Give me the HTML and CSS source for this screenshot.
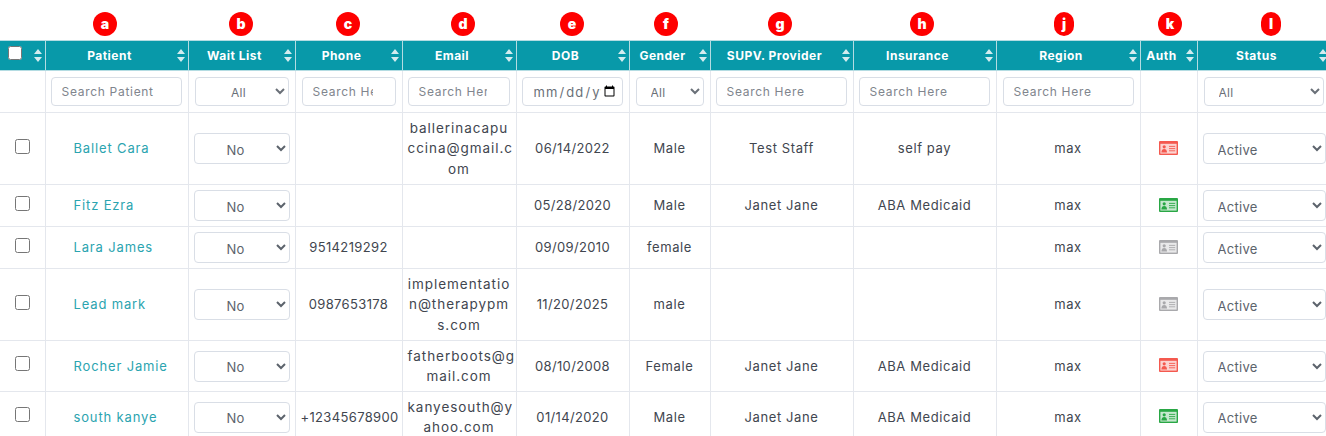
FILE: index.html
```html
<!DOCTYPE html>
<html lang="en">
<head>
<meta charset="utf-8">
<title>Patients</title>
<link rel="stylesheet" href="styles.css">
</head>
<body>
<svg class="defs" width="0" height="0" aria-hidden="true">
  <symbol id="sort" viewBox="0 0 8 13">
    <path d="M4 0 8 5H0Z M0 8H8L4 13Z" fill="currentColor"/>
  </symbol>
  <symbol id="card" viewBox="0 0 19 14">
    <rect x="0" y="0" width="19" height="14" rx="1" fill="currentColor"/>
    <rect x="1.4" y="2.8" width="16.2" height="9.8" fill="#fff" fill-opacity=".74"/>
    <circle cx="5.2" cy="5.8" r="1.6" fill="currentColor"/>
    <path d="M2.4 11.6c0-2.6 1.2-3.6 2.8-3.6s2.8 1 2.8 3.6Z" fill="currentColor"/>
    <path d="M10 5.4h6.2M10 7.6h6.2M10 9.8h6.2" stroke="currentColor" stroke-width=".9" fill="none"/>
  </symbol>
</svg>
<main class="page">
  <div class="marks" aria-hidden="true">
    <span class="mark m-a">a</span><span class="mark m-b">b</span><span class="mark m-c">c</span>
    <span class="mark m-d">d</span><span class="mark m-e">e</span><span class="mark m-f">f</span>
    <span class="mark m-g">g</span><span class="mark m-h">h</span><span class="mark narrow m-j">j</span>
    <span class="mark m-k">k</span><span class="mark narrow m-l">l</span>
  </div>
  <table class="grid">
    <colgroup>
      <col class="c0"><col class="c1"><col class="c2"><col class="c3"><col class="c4"><col class="c5">
      <col class="c6"><col class="c7"><col class="c8"><col class="c9"><col class="c10"><col class="c11">
    </colgroup>
    <thead>
      <tr class="head">
        <th class="th-check"><input class="head-check" type="checkbox"><svg class="sort"><use href="#sort"/></svg></th>
        <th>Patient<svg class="sort"><use href="#sort"/></svg></th>
        <th>Wait List<svg class="sort"><use href="#sort"/></svg></th>
        <th>Phone<svg class="sort"><use href="#sort"/></svg></th>
        <th>Email<svg class="sort"><use href="#sort"/></svg></th>
        <th>DOB<svg class="sort"><use href="#sort"/></svg></th>
        <th>Gender<svg class="sort"><use href="#sort"/></svg></th>
        <th>SUPV. Provider<svg class="sort"><use href="#sort"/></svg></th>
        <th>Insurance<svg class="sort"><use href="#sort"/></svg></th>
        <th>Region<svg class="sort"><use href="#sort"/></svg></th>
        <th>Auth<svg class="sort"><use href="#sort"/></svg></th>
        <th>Status<svg class="sort"><use href="#sort"/></svg></th>
      </tr>
      <tr class="filters">
        <td></td>
        <td><input class="field" type="text" placeholder="Search Patient"></td>
        <td class="inset"><select class="field pick center"><option>All</option></select></td>
        <td class="inset"><input class="field" type="text" placeholder="Search Here"></td>
        <td><input class="field" type="text" placeholder="Search Here"></td>
        <td><input class="field date" type="date"></td>
        <td class="inset"><select class="field pick"><option>All</option></select></td>
        <td><input class="field" type="text" placeholder="Search Here"></td>
        <td><input class="field" type="text" placeholder="Search Here"></td>
        <td class="inset"><input class="field" type="text" placeholder="Search Here"></td>
        <td></td>
        <td class="inset"><select class="field pick"><option>All</option></select></td>
      </tr>
    </thead>
    <tbody>
      <tr class="tall">
        <td><input class="row-check" type="checkbox"></td>
        <td class="name"><a href="#">Ballet Cara</a></td>
        <td><select class="cell-pick center"><option>No</option></select></td>
        <td></td>
        <td class="mail">ballerinacapu<br>ccina@gmail.c<br>om</td>
        <td class="num">06/14/2022</td>
        <td>Male</td>
        <td>Test Staff</td>
        <td>self pay</td>
        <td>max</td>
        <td><svg class="card red"><use href="#card"/></svg></td>
        <td><select class="cell-pick status"><option>Active</option></select></td>
      </tr>
      <tr class="short">
        <td><input class="row-check" type="checkbox"></td>
        <td class="name"><a href="#">Fitz Ezra</a></td>
        <td><select class="cell-pick center"><option>No</option></select></td>
        <td></td>
        <td></td>
        <td class="num">05/28/2020</td>
        <td>Male</td>
        <td>Janet Jane</td>
        <td>ABA Medicaid</td>
        <td>max</td>
        <td><svg class="card green"><use href="#card"/></svg></td>
        <td><select class="cell-pick status"><option>Active</option></select></td>
      </tr>
      <tr class="short">
        <td><input class="row-check" type="checkbox"></td>
        <td class="name"><a href="#">Lara James</a></td>
        <td><select class="cell-pick center"><option>No</option></select></td>
        <td class="num">9514219292</td>
        <td></td>
        <td class="num">09/09/2010</td>
        <td>female</td>
        <td></td>
        <td></td>
        <td>max</td>
        <td><svg class="card grey"><use href="#card"/></svg></td>
        <td><select class="cell-pick status"><option>Active</option></select></td>
      </tr>
      <tr class="tall">
        <td><input class="row-check" type="checkbox"></td>
        <td class="name"><a href="#">Lead mark</a></td>
        <td><select class="cell-pick center"><option>No</option></select></td>
        <td class="num">0987653178</td>
        <td class="mail">implementatio<br>n@therapypm<br>s.com</td>
        <td class="num">11/20/2025</td>
        <td>male</td>
        <td></td>
        <td></td>
        <td>max</td>
        <td><svg class="card grey"><use href="#card"/></svg></td>
        <td><select class="cell-pick status"><option>Active</option></select></td>
      </tr>
      <tr class="mid">
        <td><input class="row-check" type="checkbox"></td>
        <td class="name"><a href="#">Rocher Jamie</a></td>
        <td><select class="cell-pick center"><option>No</option></select></td>
        <td></td>
        <td class="mail">fatherboots@g<br>mail.com</td>
        <td class="num">08/10/2008</td>
        <td>Female</td>
        <td>Janet Jane</td>
        <td>ABA Medicaid</td>
        <td>max</td>
        <td><svg class="card red"><use href="#card"/></svg></td>
        <td><select class="cell-pick status"><option>Active</option></select></td>
      </tr>
      <tr class="mid">
        <td><input class="row-check" type="checkbox"></td>
        <td class="name"><a href="#">south kanye</a></td>
        <td><select class="cell-pick center"><option>No</option></select></td>
        <td class="num">+12345678900</td>
        <td class="mail">kanyesouth@y<br>ahoo.com</td>
        <td class="num">01/14/2020</td>
        <td>Male</td>
        <td>Janet Jane</td>
        <td>ABA Medicaid</td>
        <td>max</td>
        <td><svg class="card green"><use href="#card"/></svg></td>
        <td><select class="cell-pick status"><option>Active</option></select></td>
      </tr>
    </tbody>
  </table>
</main>
</body>
</html>
```
FILE: styles.css
```css
* { box-sizing: border-box; }
html, body { margin: 0; height: 100%; overflow: hidden; background: #fff; }
body { font-family: Inter, "Open Sans", sans-serif; font-size: 13px; color: #41464f; }
.defs { position: absolute; }
.page { position: relative; width: 1330px; padding-top: 40px; }

.marks { position: absolute; inset: 0; height: 40px; }
.mark {
  position: absolute; top: 12px; width: 24px; height: 24px; border-radius: 12px;
  background: #fe0000; color: #fff; font-size: 14px; font-weight: 900; line-height: 23px; text-align: center;
}
.narrow { width: 20px; }
.m-a { left: 93px; } .m-b { left: 229px; } .m-c { left: 336px; } .m-d { left: 451px; }
.m-e { left: 560px; } .m-f { left: 654px; } .m-g { left: 768px; } .m-h { left: 910px; }
.m-j { left: 1054px; } .m-k { left: 1158px; } .m-l { left: 1261px; }

.grid { width: 1330px; border-collapse: collapse; table-layout: fixed; }
.c0 { width: 45px; } .c1 { width: 143px; } .c2 { width: 107px; } .c3 { width: 107px; }
.c4 { width: 114px; } .c5 { width: 113px; } .c6 { width: 81px; } .c7 { width: 143px; }
.c8 { width: 143px; } .c9 { width: 144px; } .c10 { width: 57px; } .c11 { width: 133px; }

.head { height: 30px; }
.head th {
  position: relative; padding: 0 16px 0 2px; background: #0899a9; color: #fff;
  border: 1px solid #b4dce2;
  font-size: 12px; font-weight: 700; letter-spacing: .5px; text-align: center; white-space: nowrap;
}
.head th:first-child { border-left: 0; }
.sort { position: absolute; right: 3px; top: 8px; width: 8px; height: 13px; color: #d3ecef; }
.head-check { position: absolute; left: 8px; top: 5px; width: 14px; height: 14px; margin: 0; }

td { border: 1px solid #e4e7ed; padding: 0 5px; text-align: center; vertical-align: middle; line-height: 20.5px; white-space: nowrap; letter-spacing: .6px; }
td:first-child { border-left: 0; }
.num { letter-spacing: .35px; }
.mail { font-size: 13.5px; letter-spacing: .95px; }
.filters { height: 42px; }
.filters td { padding: 0 6px 0 5px; }
.filters .inset { padding-left: 6px; }
.field {
  display: block; width: 100%; height: 29px; padding: 0 22px 0 10px; margin: 0;
  border: 1px solid #d9dee6; border-radius: 4px; background: #fff;
  font: 12px Inter, sans-serif; letter-spacing: .7px; color: #6a7078;
}
.field::placeholder { color: #80858d; opacity: 1; }
.date { padding: 0 4px 0 10px; font-size: 13px; letter-spacing: 1.1px; }
.pick { padding: 2px 4px 0 10px; letter-spacing: .3px; }
.center { text-align: center; }

.tall { height: 72px; } .short { height: 42px; } .mid { height: 51px; }
.row-check { display: block; width: 15px; height: 15px; margin: -5px auto 0; }
.name { text-align: left; padding-left: 28px; }
.name a { color: #2ba4b0; text-decoration: none; letter-spacing: .85px; }
.cell-pick {
  display: block; width: 96px; height: 31px; margin: 0 auto; padding: 2px 0 0 0;
  border: 1px solid #d9dee6; border-radius: 4px; background: #fff;
  font: 13px Inter, sans-serif; letter-spacing: .3px; color: #5c636c;
}
.status { width: 123px; padding-left: 10px; text-align: left; margin-left: 0; }
.card { display: block; width: 19px; height: 14px; margin: -2px auto 0; }
.red { color: #f4594f; } .green { color: #29a745; } .grey { color: #a9a9ac; }
```
